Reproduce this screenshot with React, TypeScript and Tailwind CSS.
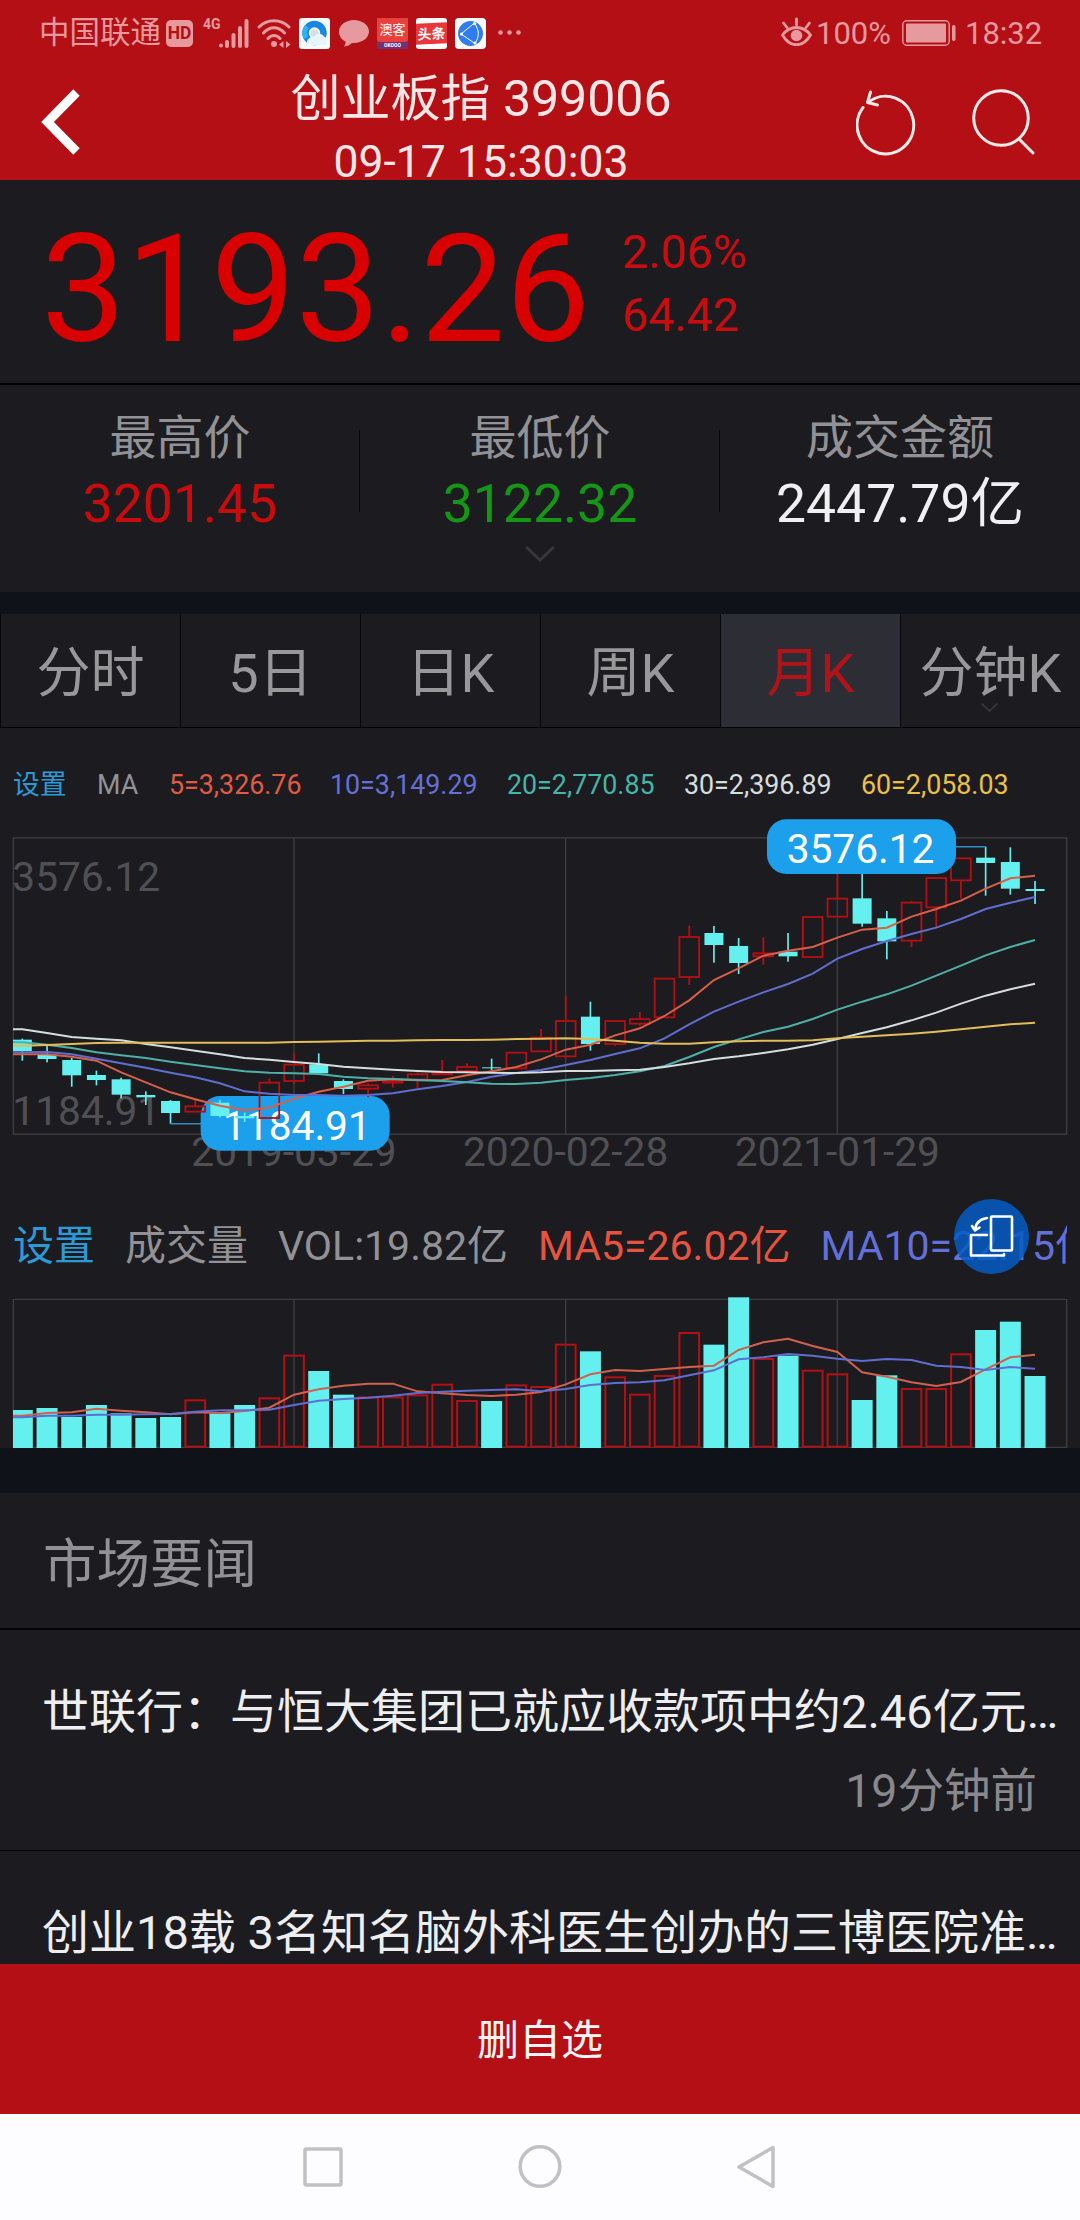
import { clsx } from 'clsx'

type Candle = {
  up?: boolean
  high: number
  low: number
  top: number
  bottom: number
}

// chart units are a third of a pixel
const STEP = 74.1
const FIRST = 67
const cx = (i: number) => FIRST + i * STEP

const TEAL = '#64f0ee'
const RED = '#b40f12'
const GRID = '#424246'

const c = (up: number, high: number, top: number, bottom: number, low: number): Candle => ({
  up: up === 1,
  high,
  top,
  bottom,
  low,
})

const candles: Candle[] = [
  c(0, 656, 659, 693, 722),
  c(0, 672, 704, 717, 727),
  c(0, 714, 720, 766, 800),
  c(0, 752, 765, 780, 796),
  c(0, 773, 778, 824, 835),
  c(0, 814, 825, 832, 855),
  c(0, 840, 843, 879, 911),
  c(1, 833, 859, 875, 877),
  c(0, 840, 848, 888, 892),
  c(0, 878, 888, 895, 906),
  c(1, 775, 788, 894, 894),
  c(1, 700, 734, 783, 792),
  c(0, 700, 733, 760, 765),
  c(0, 778, 783, 807, 822),
  c(1, 790, 796, 806, 832),
  c(1, 768, 784, 788, 803),
  c(1, 757, 763, 778, 805),
  c(1, 720, 758, 763, 764),
  c(1, 730, 741, 753, 755),
  c(0, 716, 742, 745, 750),
  c(1, 698, 698, 745, 748),
  c(1, 627, 653, 694, 694),
  c(1, 528, 603, 709, 715),
  c(0, 545, 590, 672, 692),
  c(1, 603, 603, 672, 678),
  c(1, 576, 597, 611, 618),
  c(1, 476, 476, 592, 592),
  c(1, 317, 351, 471, 495),
  c(0, 318, 339, 375, 428),
  c(0, 354, 378, 429, 462),
  c(1, 352, 400, 409, 434),
  c(0, 339, 395, 409, 425),
  c(1, 291, 291, 411, 411),
  c(1, 140, 236, 290, 290),
  c(0, 140, 235, 311, 320),
  c(0, 273, 295, 364, 418),
  c(1, 243, 248, 362, 381),
  c(1, 174, 174, 262, 325),
  c(1, 115, 115, 181, 236),
  c(0, 80, 113, 129, 227),
  c(0, 82, 126, 206, 224),
  c(0, 183, 207, 213, 252),
]

const priceLines = [
  {
    color: '#d95f49',
    values: [
      703, 703, 710, 722, 757, 787, 817, 838, 857, 871, 863, 836, 815, 800, 782, 778, 781, 780, 766, 754, 741,
      718, 689, 674, 646, 625, 588, 541, 480, 445, 407, 392, 381, 353, 329, 323, 290, 267, 242, 206, 175, 167,
    ],
  },
  {
    color: '#5f6ecf',
    values: [
      697, 696, 703, 716, 730, 743, 758, 772, 790, 814, 821, 825, 825, 827, 825, 820, 808, 798, 786, 770, 759,
      750, 735, 720, 702, 685, 655, 613, 575, 545, 517, 492, 461, 416, 387, 363, 342, 323, 297, 267, 248, 231,
    ],
  },
  {
    color: '#4eb0a8',
    values: [
      667, 674, 684, 697, 706, 714, 725, 735, 745, 754, 758, 760, 762, 770, 775, 777, 780, 783, 787, 791, 792,
      788, 780, 774, 765, 754, 738, 711, 681, 658, 636, 620, 597, 569, 545, 523, 497, 467, 437, 406, 381, 360,
    ],
  },
  {
    color: '#d5dedd',
    values: [
      628, 639, 651, 656, 661, 672, 682, 692, 703, 714, 719, 726, 732, 740, 745, 749, 753, 756, 757, 758, 759,
      757, 753, 753, 751, 749, 741, 730, 717, 709, 699, 688, 674, 657, 639, 622, 601, 578, 551, 527, 508, 491,
    ],
  },
  {
    color: '#e2bd59',
    values: [
      677, 675, 672, 669, 668, 668, 668, 668, 668, 668, 668, 666, 665, 664, 662, 662, 661, 660, 660, 659, 657,
      656, 655, 657, 662, 668, 671, 671, 667, 664, 662, 662, 661, 655, 650, 646, 641, 635, 628, 620, 613, 608,
    ],
  },
]

const volumes = [
  660, 654, 681, 645, 670, 684, 681, 631, 670, 645, 625, 497, 543, 614, 622, 622, 616, 584, 633, 633, 586, 591,
  464, 484, 562, 614, 558, 429, 464, 322, 507, 497, 542, 553, 630, 556, 597, 597, 493, 420, 395, 558,
]

const volumeLines = [
  {
    color: '#d06150',
    values: [
      677, 669, 667, 656, 662, 667, 673, 667, 669, 663, 653, 614, 598, 587, 581, 581, 604, 610, 615, 618, 614,
      606, 583, 553, 540, 543, 537, 531, 527, 480, 457, 446, 468, 486, 547, 560, 577, 588, 576, 538, 502, 494,
    ],
  },
  {
    color: '#5f6ecf',
    values: [
      682, 677, 677, 674, 674, 673, 672, 665, 661, 661, 659, 645, 632, 627, 623, 617, 609, 605, 602, 600, 598,
      604, 597, 585, 579, 577, 571, 556, 541, 508, 502, 492, 497, 506, 513, 507, 510, 527, 531, 540, 531, 536,
    ],
  },
]

const GRID_X = [882, 1697, 2512]

const linePoints = (values: number[]) =>
  `39,${values[0]} ` + values.map((v, i) => `${cx(i).toFixed(1)},${v}`).join(' ')

function CandleShape({ candle, x }: { candle: Candle; x: number }) {
  const { up, high, low, top, bottom } = candle
  if (up) {
    return (
      <g stroke={RED} strokeWidth={5.5} fill="none">
        <rect x={x - 29.5} y={top} width={59} height={bottom - top} />
        <path d={`M${x} ${high}V${top}M${x} ${bottom}V${low}`} />
      </g>
    )
  }
  const left = Math.max(x - 28.5, 39)
  return (
    <g fill={TEAL}>
      <rect x={left} y={top} width={x + 28.5 - left} height={bottom - top} />
      <rect x={x - 2.5} y={high} width={5} height={low - high} />
    </g>
  )
}

function PriceTag({ x, y, textX, label, line }: { x: number; y: number; textX: number; label: string; line: string }) {
  return (
    <g>
      <path d={line} stroke="#2f8cc4" strokeWidth={4.5} fill="none" />
      <rect x={x} y={y} width={567} height={164} rx={58} fill="#1da0ec" />
      <text x={textX} y={y + 131} fontSize={122} fill="#fff">
        {label}
      </text>
    </g>
  )
}

function PriceChart() {
  return (
    <svg viewBox="0 0 3240 1080" className="block h-[360px] w-[1080px] overflow-visible">
      <g stroke={GRID} strokeWidth={3.5} fill="none">
        <rect x={40} y={53.5} width={3160} height={889} />
        {GRID_X.map(x => (
          <path key={x} d={`M${x} 53V942`} />
        ))}
      </g>
      <g fontSize={122} fill="#505054">
        <text x={37} y={213}>3576.12</text>
        <text x={37} y={915}>1184.91</text>
        <text x={882} y={1038} textAnchor="middle">2019-03-29</text>
        <text x={1697} y={1038} textAnchor="middle">2020-02-28</text>
        <text x={2512} y={1038} textAnchor="middle">2021-01-29</text>
      </g>
      {candles.map((candle, i) => (
        <g key={i}>
          <CandleShape candle={candle} x={cx(i)} />
          {i === 6 && <PriceTag x={602} y={828} textX={669} label="1184.91" line="M511 911H610" />}
          {i === 39 && <PriceTag x={2301} y={-2} textX={2360} label="3576.12" line="M2957 80H2860" />}
        </g>
      ))}
      {priceLines.map(l => (
        <polyline key={l.color} points={linePoints(l.values)} stroke={l.color} strokeWidth={6} fill="none" />
      ))}
    </svg>
  )
}

function VolumeChart() {
  return (
    <svg viewBox="0 300 3240 474" className="block h-[158px] w-[1080px]">
      <g stroke={GRID} strokeWidth={3.5} fill="none">
        <rect x={40} y={328} width={3160} height={444} />
        {GRID_X.map(x => (
          <path key={x} d={`M${x} 328V772`} />
        ))}
      </g>
      {volumes.map((top, i) => {
        const x = cx(i)
        if (candles[i].up) {
          return (
            <rect
              key={i}
              x={x - 29.5}
              y={top}
              width={59}
              height={770 - top}
              stroke={RED}
              strokeWidth={6}
              fill="none"
            />
          )
        }
        const left = Math.max(x - 31.5, 39)
        return <rect key={i} x={left} y={top} width={x + 31.5 - left} height={774 - top} fill={TEAL} />
      })}
      {volumeLines.map(l => (
        <polyline key={l.color} points={linePoints(l.values)} stroke={l.color} strokeWidth={6} fill="none" />
      ))}
    </svg>
  )
}

function StatusBar() {
  return (
    <div className="flex h-[66px] items-center text-[#e69a9e]">
      <span className="ml-[39px] w-[122px] text-[30.5px] leading-none whitespace-nowrap">中国联通</span>
      <div className="ml-[5px] flex h-[27px] w-[27px] items-center justify-center rounded-[5px] bg-[#e69a9e] text-[17.5px] font-bold text-[#b40f15]">
        HD
      </div>
      <span className="mt-[-18px] ml-[10px] w-[16px] text-[14px] leading-none font-bold">4G</span>
      <svg viewBox="0 0 30 30" className="h-[30px] w-[30px]" fill="currentColor">
        <circle cx="2" cy="27.5" r="2" />
        <rect x="6" y="22" width="4" height="8" rx="2" />
        <rect x="12.5" y="15" width="4" height="15" rx="2" />
        <rect x="19" y="8" width="4" height="22" rx="2" />
        <rect x="25.5" y="1" width="4" height="29" rx="2" />
      </svg>
      <svg viewBox="0 0 35 30" className="ml-[8px] h-[30px] w-[35px]" fill="none" stroke="currentColor" strokeWidth="3" strokeLinecap="round">
        <path d="M2 9C10 0.500 24 0.500 32 9M6.500 15C12.500 8 21.500 8 27.500 15M11 20.500C14.500 16.500 19.500 16.500 23 20.500" />
        <circle cx="17" cy="26" r="3" fill="currentColor" stroke="none" />
        <path d="M22 26.500L26.500 23V30ZM33.500 26.500L29 23V30Z" fill="currentColor" stroke="none" />
      </svg>
      <svg viewBox="0 0 31 31" className="ml-[7px] h-[31px] w-[31px]">
        <rect width="31" height="31" rx="3" fill="#f8fcff" />
        <circle cx="15.500" cy="15" r="9" fill="none" stroke="#1787e2" strokeWidth="6.500" />
        <path d="M7 20A10 10 0 0 1 8 8.500" fill="none" stroke="#2fb2f0" strokeWidth="5" />
        <circle cx="15.500" cy="15.500" r="4.200" fill="#d6dfe6" />
        <path d="M9 27a4.500 4.500 0 0 1 1.500-7 5 5 0 0 1 5-1.500 5.500 5.500 0 0 1 9.500 0 5 5 0 0 1 2 8.500Z" fill="#e6f5fe" />
      </svg>
      <svg viewBox="0 0 30 30" className="ml-[9px] h-[30px] w-[30px]" fill="currentColor">
        <path d="M15 2C7 2 0 7 0 13.500c0 4.500 2.500 8 6.500 10 0 2-.5 3.500-1.500 5 3.500-.3 6-1.500 8-3.500h2c8 0 15-5 15-11.500S23 2 15 2Z" />
      </svg>
      <div className="ml-[8px] flex h-[31px] w-[31px] flex-col bg-[#70307c]">
        <div className="flex h-[24px] items-center justify-center rounded-b-[3px] bg-[#e8403c] text-[13px] leading-none whitespace-nowrap text-white">
          澳客
        </div>
        <div className="flex h-[7px] items-center justify-center overflow-hidden text-[5px] leading-none font-bold text-white">
          OKOOO
        </div>
      </div>
      <div className="ml-[8px] flex h-[31px] w-[31px] flex-col justify-center overflow-hidden rounded-[3px] bg-white">
        <div className="flex h-[21px] -skew-y-3 items-center justify-center bg-[#e8363a] text-[14px] leading-none font-bold whitespace-nowrap text-white">
          头条
        </div>
      </div>
      <svg viewBox="0 0 31 31" className="ml-[8px] h-[31px] w-[31px]">
        <rect width="31" height="31" rx="4" fill="#fff" />
        <circle cx="15.500" cy="15.500" r="12.500" fill="#2f7df0" />
        <path d="M6 16L19.500 5M6 16L20 25.500M19.500 5C24.500 13 24.500 18 20 25.500" stroke="#fff" strokeWidth="1" fill="none" />
        <g fill="#fff">
          <circle cx="6.500" cy="16" r="1.600" />
          <circle cx="19.500" cy="5.500" r="1.600" />
          <circle cx="20" cy="25" r="1.600" />
        </g>
      </svg>
      <svg viewBox="0 0 24 6" className="ml-[12px] h-[6px] w-[24px]" fill="currentColor">
        <circle cx="2.500" cy="2.500" r="2.300" />
        <circle cx="11.500" cy="2.500" r="2.300" />
        <circle cx="20.500" cy="2.500" r="2.300" />
      </svg>
      <svg viewBox="0 0 31 29" className="mt-[-4px] ml-auto h-[29px] w-[31px]" fill="none" stroke="currentColor" strokeWidth="2.800" strokeLinecap="round">
        <path d="M1.500 18C9 8 22 8 29.500 18C22 31 9 31 1.500 18Z" />
        <path d="M15.500 2V8M2.500 6L6 10.500M28.500 6L25 10.500" />
        <circle cx="15.500" cy="18.500" r="5.800" fill="currentColor" stroke="none" />
      </svg>
      <span className="ml-[4px] w-[77px] text-[31px] leading-none">100%</span>
      <svg viewBox="0 0 54 26" className="ml-[9px] h-[26px] w-[54px]">
        <rect x="0.800" y="0.800" width="46.400" height="24.400" rx="4" fill="none" stroke="currentColor" strokeWidth="1.400" />
        <rect x="4" y="3.500" width="40" height="19" rx="1" fill="currentColor" />
        <rect x="50" y="5" width="3.500" height="16" rx="1.700" fill="currentColor" />
      </svg>
      <span className="mr-[36px] ml-[9px] w-[79px] text-[31px] leading-none">18:32</span>
    </div>
  )
}

function Header() {
  return (
    <header className="h-[180px] bg-[#b40f15]">
      <StatusBar />
      <div className="flex h-[114px]">
        <div className="w-[106px] pt-[23px] pl-[41px]">
          <svg viewBox="0 0 40 66" className="h-[66px] w-[40px]" fill="none" stroke="#fff" strokeWidth="9">
            <path d="M35.500 3.500L6.500 33L35.500 62.500" />
          </svg>
        </div>
        <div className="flex-1 text-center text-[#ffe6e6]">
          <h1 className="text-[50px] leading-[66px]">创业板指 399006</h1>
          <p className="text-[44.5px] leading-[60px]">09-17 15:30:03</p>
        </div>
        <div className="flex w-[224px] gap-[54px] pt-[23px]">
          <svg viewBox="0 0 62 68" className="h-[68px] w-[62px]" fill="none" stroke="#ffeaea" strokeWidth="3" strokeLinecap="round" strokeLinejoin="round">
            <path d="M7 18.500A28.300 28.800 0 1 0 12.500 13" />
            <path d="M14.500 3L11.500 13.500L21.500 16" />
          </svg>
          <svg viewBox="0 0 64 68" className="h-[68px] w-[64px]" fill="none" stroke="#ffeaea" strokeWidth="3" strokeLinecap="round">
            <circle cx="29" cy="29" r="27.300" />
            <path d="M47 50L61 64" />
          </svg>
        </div>
      </div>
    </header>
  )
}

const stats = [
  { label: '最高价', value: '3201.45', color: 'text-[#c90b0e]' },
  { label: '最低价', value: '3122.32', color: 'text-[#169616]' },
  { label: '成交金额', value: '2447.79亿', color: 'text-[#f0eff1]' },
]

const tabs = ['分时', '5日', '日K', '周K', '月K', '分钟K']

const news = [
  { title: '世联行：与恒大集团已就应收款项中约2.46亿元…', time: '19分钟前' },
  { title: '创业18载 3名知名脑外科医生创办的三博医院准…', time: '' },
]

function Chevron({ className }: { className?: string }) {
  return (
    <svg viewBox="0 0 30 16" className={className} fill="none" stroke="#37373b" strokeWidth="3">
      <path d="M1 1L15 14L29 1" />
    </svg>
  )
}

export default function App() {
  return (
    <div className="flex h-[2220px] w-[1080px] flex-col overflow-hidden bg-[#1c1c20] font-['Roboto','Noto_Sans_CJK_SC',sans-serif]">
      <Header />

      {/* Quote */}
      <section className="flex h-[205px] shrink-0 border-b-2 border-[#050508] pt-[35px] pl-[41px] text-[#d80000]">
        <div className="w-[581px] text-[151px] leading-[150px]">3193.26</div>
        <div className="pt-[6px] text-[46.5px] leading-[63px] text-[#c80c10]">
          <div>2.06%</div>
          <div>64.42</div>
        </div>
      </section>

      {/* Stats */}
      <section className="h-[207px] shrink-0 pt-[20px]">
        <div className="grid grid-cols-3">
          {stats.map((s, i) => (
            <div key={s.label} className="flex items-center">
              <div className="flex-1 text-center">
                <div className="text-[47px] leading-[66px] text-[#929296]">{s.label}</div>
                <div className={clsx('text-[53.5px] leading-[66px]', s.color)}>{s.value}</div>
              </div>
              {i < 2 && <div className="-ml-px h-[82px] w-px bg-[#08080b]" />}
            </div>
          ))}
        </div>
        <Chevron className="mx-auto mt-[9px] h-[16px] w-[30px]" />
      </section>

      <div className="h-[22px] shrink-0 bg-[#10121a]" />

      {/* Period tabs */}
      <nav className="grid h-[114px] shrink-0 grid-cols-6 border-b border-[#050508]">
        {tabs.map(tab => (
          <div
            key={tab}
            className={clsx(
              'relative flex items-center justify-center border-l border-[#08080b] pt-[7px] text-[54px] leading-none whitespace-nowrap',
              tab === '月K' ? 'bg-[#2d2d36] text-[#b01318]' : 'text-[#98989b]'
            )}
          >
            {tab}
            {tab === '分钟K' && <Chevron className="absolute bottom-[15px] left-[80px] h-[9px] w-[17px]" />}
          </div>
        ))}
      </nav>

      {/* Moving averages */}
      <div className="flex h-[92px] shrink-0 items-center pt-[22px] pl-[13px] text-[26.8px] leading-none whitespace-nowrap">
        <span className="w-[84px] text-[#2b9bd8]">设置</span>
        <span className="w-[72px] text-[#929296]">MA</span>
        <span className="w-[161px] text-[#e05a44]">5=3,326.76</span>
        <span className="w-[177px] text-[#6470d8]">10=3,149.29</span>
        <span className="w-[177px] text-[#45b5a8]">20=2,770.85</span>
        <span className="w-[177px] text-[#d5dedd]">30=2,396.89</span>
        <span className="text-[#ecc046]">60=2,058.03</span>
      </div>
      <PriceChart />

      {/* Volume */}
      <div className="relative h-[110px] shrink-0 px-[13px] pt-[22px]">
        <div className="flex h-[88px] items-center gap-[30px] overflow-hidden text-[41px] leading-none whitespace-nowrap">
          <span className="text-[#2b9bd8]">设置</span>
          <span className="text-[#929296]">成交量</span>
          <span className="text-[#929296]">VOL:19.82亿</span>
          <span className="text-[#e6533f]">MA5=26.02亿</span>
          <span className="text-[#6270d8]">MA10=22.15亿</span>
        </div>
        <button className="absolute top-[19px] left-[954px] h-[75px] w-[75px] rounded-full bg-[#055cc4]/85">
          <svg viewBox="0 0 75 75" className="h-[75px] w-[75px]" fill="none" stroke="#fff" strokeWidth="2.600" strokeLinejoin="round" strokeLinecap="round">
            <rect x="37" y="17.500" width="21" height="34" rx="1" />
            <path d="M33 36H17V56.500H50V55" />
            <path d="M33 19C26 20 22 24 21 30M18 27L21 31.500L25.500 28.500" />
          </svg>
        </button>
      </div>
      <VolumeChart />

      <div className="h-[45px] shrink-0 bg-[#10121a]" />

      {/* News */}
      <h2 className="flex h-[137px] shrink-0 items-center border-b-2 border-[#050508] pt-[8px] pl-[43px] text-[53.5px] leading-none text-[#929296]">
        市场要闻
      </h2>
      <div className="h-[334px] shrink-0 overflow-hidden">
        {news.map(item => (
          <article key={item.title} className="h-[221px] border-b border-[#050508] pt-[42px] pr-[43px] pl-[42px]">
            <h3 className="text-[47px] leading-[80px] whitespace-nowrap text-[#eeedf0]">{item.title}</h3>
            <p className="text-right text-[46.5px] leading-[78px] text-[#89898d]">{item.time}</p>
          </article>
        ))}
      </div>

      <button className="h-[150px] shrink-0 bg-[#b40f15] pt-[4px] text-[42px] leading-none text-[#fff3f3]">删自选</button>

      <div className="flex h-[106px] shrink-0 items-center justify-center gap-[173px] bg-[#fdfcff]">
        <svg viewBox="0 0 44 44" className="h-[44px] w-[44px]" fill="none" stroke="#c1c0c3" strokeWidth="3.500">
          <rect x="4" y="4" width="36" height="36" rx="1.500" />
        </svg>
        <svg viewBox="0 0 44 44" className="h-[44px] w-[44px]" fill="none" stroke="#c1c0c3" strokeWidth="3.500">
          <circle cx="22" cy="21.500" r="19.800" />
        </svg>
        <svg viewBox="0 0 44 44" className="h-[44px] w-[44px]" fill="none" stroke="#c1c0c3" strokeWidth="3.500" strokeLinejoin="round">
          <path d="M38 2.500V41.500L4 22Z" />
        </svg>
      </div>
    </div>
  )
}
